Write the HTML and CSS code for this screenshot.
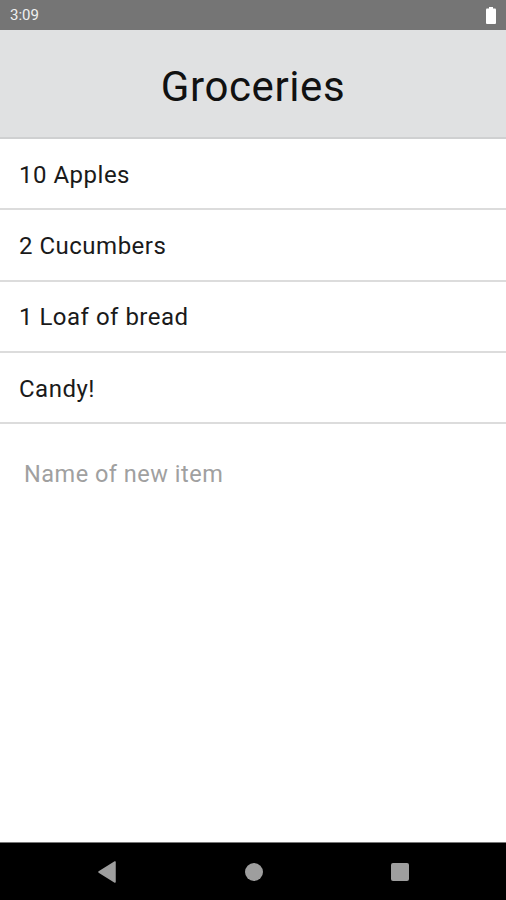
FILE: index.html
```html
<!DOCTYPE html>
<html lang="en">
<head>
  <meta charset="UTF-8">
  <title>Groceries</title>
  <link rel="stylesheet" href="styles.css">
</head>
<body>
  <div class="phone">
    <div class="status-bar">
      <span class="time">3:09</span>
      <svg class="battery" width="10" height="17" viewBox="0 0 10 17">
        <rect x="3" y="0" width="4" height="2" fill="#fff"/>
        <rect x="0" y="1.5" width="10" height="15.5" rx="1" fill="#fff"/>
      </svg>
    </div>

    <header class="app-header">
      <h1>Groceries</h1>
    </header>

    <ul class="item-list">
      <li>10 Apples</li>
      <li>2 Cucumbers</li>
      <li>1 Loaf of bread</li>
      <li>Candy!</li>
    </ul>

    <input class="new-item" type="text" placeholder="Name of new item">

    <div class="spacer"></div>

    <nav class="nav-bar">
      <svg width="20" height="22" viewBox="0 0 20 22">
        <path d="M18 1 L18 21 L2 11 Z" fill="#9e9e9e" stroke="#9e9e9e" stroke-width="1.5" stroke-linejoin="round"/>
      </svg>
      <svg width="20" height="20" viewBox="0 0 20 20">
        <circle cx="10" cy="10" r="9" fill="#9e9e9e"/>
      </svg>
      <svg width="20" height="20" viewBox="0 0 20 20">
        <rect x="1" y="1" width="18" height="18" rx="2" fill="#9e9e9e"/>
      </svg>
    </nav>
  </div>
</body>
</html>
```

FILE: styles.css
```css
* {
  box-sizing: border-box;
}

body {
  margin: 0;
  font-family: Roboto, 'Liberation Sans', sans-serif;
  background-color: #fff;
}

.phone {
  width: 506px;
  height: 900px;
  display: flex;
  flex-direction: column;
}

.status-bar {
  height: 30px;
  background-color: #757575;
  display: flex;
  align-items: center;
  justify-content: space-between;
  padding: 0 10px 0 10px;
  color: #fff;
}

.time {
  font-size: 15px;
  color: #f0f0f0;
}

.battery {
  margin-top: 1px;
}

.app-header {
  height: 109px;
  background-color: #e0e1e2;
  border-bottom: 2px solid #cfd0d1;
  display: flex;
  align-items: center;
  justify-content: center;
}

.app-header h1 {
  margin: 0;
  font-size: 42px;
  letter-spacing: 0.6px;
  font-weight: 400;
  color: #111;
  padding-top: 5px;
}

.item-list {
  list-style: none;
  margin: 0;
  padding: 0;
}

.item-list li {
  height: 71.3px;
  display: flex;
  align-items: center;
  padding: 2px 0 0 19px;
  font-size: 24px;
  letter-spacing: 0.5px;
  color: #1a1a1a;
  border-bottom: 2px solid #dcdcdc;
}

.new-item {
  border: none;
  outline: none;
  height: 100px;
  padding: 0 24px;
  font-family: Roboto, 'Liberation Sans', sans-serif;
  font-size: 23.5px;
  letter-spacing: 0.5px;
  color: #222;
  background: transparent;
}

.new-item::placeholder {
  color: #a0a0a0;
}

.spacer {
  flex: 1;
}

.nav-bar {
  height: 58px;
  background-color: #000;
  border-top: 1px solid #777;
  display: flex;
  align-items: center;
  justify-content: space-between;
  padding: 0 96px 0 97px;
}
```
